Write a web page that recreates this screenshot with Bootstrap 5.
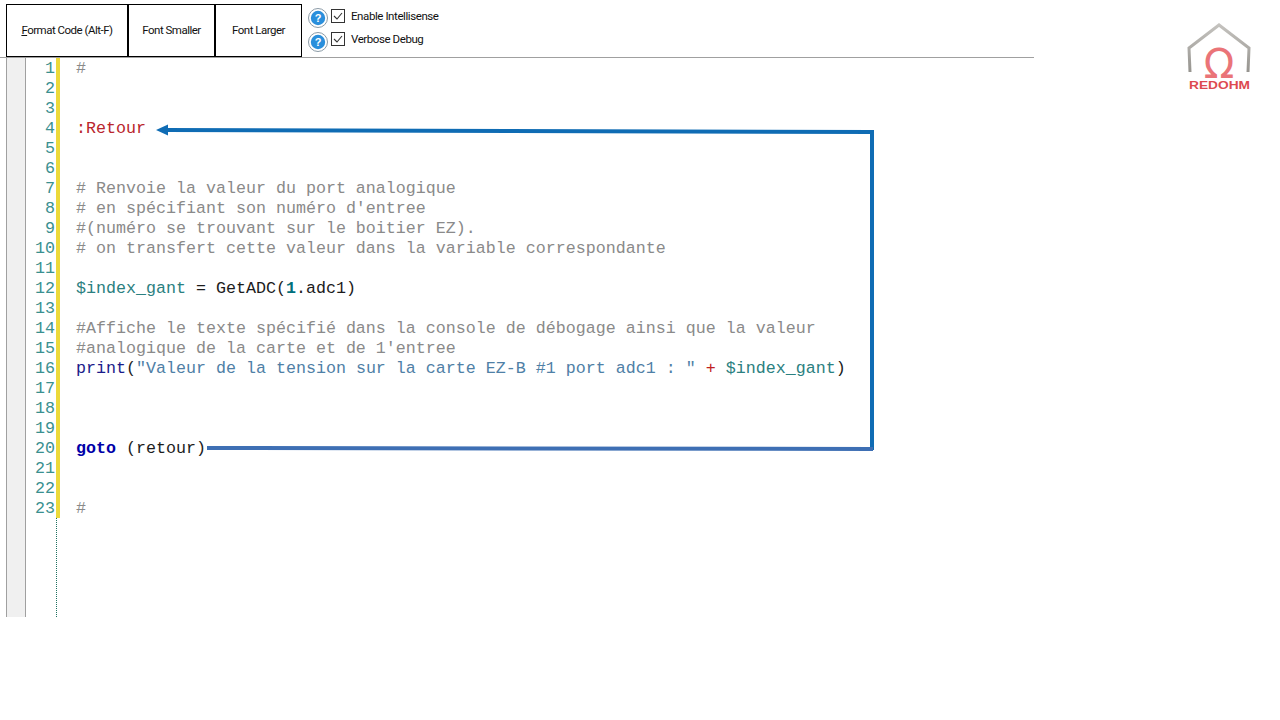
<!DOCTYPE html>
<html lang="fr">
<head>
<meta charset="utf-8">
<title>Script editor</title>
<link href="https://cdn.jsdelivr.net/npm/bootstrap@5.3.0/dist/css/bootstrap.min.css" rel="stylesheet">
<style>
html,body{background:#fff;margin:0;height:720px;overflow:hidden}
.page-shell{position:relative;width:1280px;height:720px}
.work-area{width:1034px}
.tool-strip{height:58px;padding:4px 0 0 6px;border-bottom:1px solid #a0a0a0;font-family:Roboto,sans-serif;font-size:11.5px;letter-spacing:-.42px;color:#111}
.tool-btn{height:53px;border:1px solid #000;border-radius:0;background:#fff;color:#111;padding:0;font-size:11.5px;letter-spacing:-.5px;display:flex;align-items:center;justify-content:center;white-space:nowrap}
.tool-btn.w-main{width:122px}
.tool-btn.w-small{width:87px}
.opt-stack{margin-left:6px;margin-top:1px;width:140px}
.opt-row{height:23px;gap:3px}
.opt-row svg{flex:none}
.help-dot{margin-top:2px}
.opt-row + .opt-row .help-dot{margin-top:4px}
.tick-box{margin-bottom:2px}
.opt-label{margin-left:3px;line-height:14px;margin-top:-1px;white-space:nowrap}
.editor-wrap{height:559px;margin-left:6px}
.rail-col{width:20px;background:#f0f0f0;border-left:1px solid #a0a0a0;border-right:1px solid #a0a0a0}
.num-col,.code-col{font-family:"Liberation Mono",monospace;font-size:16.667px;line-height:20px;padding-top:1px}
.num-col{width:30px;padding-right:1px;text-align:right;color:#3a9090}
.mark-col{width:4px;border-left:1px dotted #1f7060}
.mark-fill{height:460px;width:4px;margin-left:-1px;background:#ecd93a}
.code-col{padding-left:16px;color:#1c1c1c}
.code-line{height:20px;white-space:pre}
.c-note{color:#8a8a8a}
.c-label{color:#b9262c}
.c-var{color:#2b8080}
.c-num{color:#00707c;font-weight:700}
.c-fn{color:#1b1b8a}
.c-str{color:#4f80a6}
.c-op{color:#c02020}
.c-kw{color:#0000a8;font-weight:700}
.arrow-layer{position:absolute;left:0;top:0;pointer-events:none}
.brand-mark{position:absolute;left:1180px;top:18px}
</style>
</head>
<body>
<div class="page-shell">
  <div class="work-area">
    <div class="tool-strip d-flex">
      <div class="d-flex">
        <button type="button" class="btn tool-btn w-main"><span><u>F</u>ormat Code (Alt-F)</span></button>
        <button type="button" class="btn tool-btn w-small">Font Smaller</button>
        <button type="button" class="btn tool-btn w-small">Font Larger</button>
      </div>
      <div class="opt-stack d-flex flex-column">
        <div class="opt-row d-flex align-items-center">
          <svg class="help-dot" width="20" height="20" viewBox="0 0 20 20"><circle cx="10" cy="10" r="9.5" fill="#fff" stroke="#8a9aa6"/><circle cx="10" cy="10" r="7.2" fill="#2a8fdc"/><text x="10" y="14" text-anchor="middle" font-family="Liberation Sans" font-weight="700" font-size="11" fill="#fff">?</text></svg>
          <svg class="tick-box" width="14" height="14" viewBox="0 0 14 14"><rect x=".5" y=".5" width="13" height="13" fill="#fff" stroke="#333"/><path d="M3 7l3 3 5-6" fill="none" stroke="#333" stroke-width="1.1"/></svg>
          <span class="opt-label">Enable Intellisense</span>
        </div>
        <div class="opt-row d-flex align-items-center">
          <svg class="help-dot" width="20" height="20" viewBox="0 0 20 20"><circle cx="10" cy="10" r="9.5" fill="#fff" stroke="#8a9aa6"/><circle cx="10" cy="10" r="7.2" fill="#2a8fdc"/><text x="10" y="14" text-anchor="middle" font-family="Liberation Sans" font-weight="700" font-size="11" fill="#fff">?</text></svg>
          <svg class="tick-box" width="14" height="14" viewBox="0 0 14 14"><rect x=".5" y=".5" width="13" height="13" fill="#fff" stroke="#333"/><path d="M3 7l3 3 5-6" fill="none" stroke="#333" stroke-width="1.1"/></svg>
          <span class="opt-label">Verbose Debug</span>
        </div>
      </div>
    </div>
    <div class="editor-wrap d-flex">
      <div class="rail-col"></div>
      <div class="num-col"><div>1</div><div>2</div><div>3</div><div>4</div><div>5</div><div>6</div><div>7</div><div>8</div><div>9</div><div>10</div><div>11</div><div>12</div><div>13</div><div>14</div><div>15</div><div>16</div><div>17</div><div>18</div><div>19</div><div>20</div><div>21</div><div>22</div><div>23</div></div>
      <div class="mark-col"><div class="mark-fill"></div></div>
      <div class="code-col">
<div class="code-line c-note">#</div>
<div class="code-line"></div>
<div class="code-line"></div>
<div class="code-line c-label">:Retour</div>
<div class="code-line"></div>
<div class="code-line"></div>
<div class="code-line c-note"># Renvoie la valeur du port analogique</div>
<div class="code-line c-note"># en spécifiant son numéro d'entree</div>
<div class="code-line c-note">#(numéro se trouvant sur le boitier EZ).</div>
<div class="code-line c-note"># on transfert cette valeur dans la variable correspondante</div>
<div class="code-line"></div>
<div class="code-line"><span class="c-var">$index_gant</span> = GetADC(<span class="c-num">1</span>.adc1)</div>
<div class="code-line"></div>
<div class="code-line c-note">#Affiche le texte spécifié dans la console de débogage ainsi que la valeur</div>
<div class="code-line c-note">#analogique de la carte et de 1'entree</div>
<div class="code-line"><span class="c-fn">print</span>(<span class="c-str">"Valeur de la tension sur la carte EZ-B #1 port adc1 : "</span> <span class="c-op">+</span> <span class="c-var">$index_gant</span>)</div>
<div class="code-line"></div>
<div class="code-line"></div>
<div class="code-line"></div>
<div class="code-line"><span class="c-kw">goto</span> (retour)</div>
<div class="code-line"></div>
<div class="code-line"></div>
<div class="code-line c-note">#</div>
      </div>
    </div>
  </div>
  <svg class="arrow-layer" width="1280" height="720" viewBox="0 0 1280 720">
    <path d="M166 130L872 132" stroke="#0f6cb4" stroke-width="4" fill="none"/>
    <path d="M156 130l12-5.5v11z" fill="#0f6cb4"/>
    <path d="M872 130V450" stroke="#0f6cb4" stroke-width="4" fill="none"/>
    <path d="M207 448L873 449" stroke="#3e6fb4" stroke-width="4" fill="none"/>
  </svg>
  <svg class="brand-mark" width="78" height="78" viewBox="0 0 78 78">
    <defs><linearGradient id="roofShade" x1="0" y1="0" x2="0" y2="1"><stop offset="0" stop-color="#c4c2be"/><stop offset="1" stop-color="#96948f"/></linearGradient></defs>
    <path d="M10 54L9 30 39 7 69 30 68 54" fill="none" stroke="url(#roofShade)" stroke-width="3"/>
    <text x="39" y="60" text-anchor="middle" font-family="DejaVu Sans" font-size="40" fill="#ea7478">Ω</text>
    <text x="9" y="71" font-family="Liberation Sans" font-weight="700" font-size="10" textLength="61" lengthAdjust="spacingAndGlyphs" fill="#dd4a50">REDOHM</text>
  </svg>
</div>
<script src="https://cdn.jsdelivr.net/npm/bootstrap@5.3.0/dist/js/bootstrap.bundle.min.js"></script>
</body>
</html>
